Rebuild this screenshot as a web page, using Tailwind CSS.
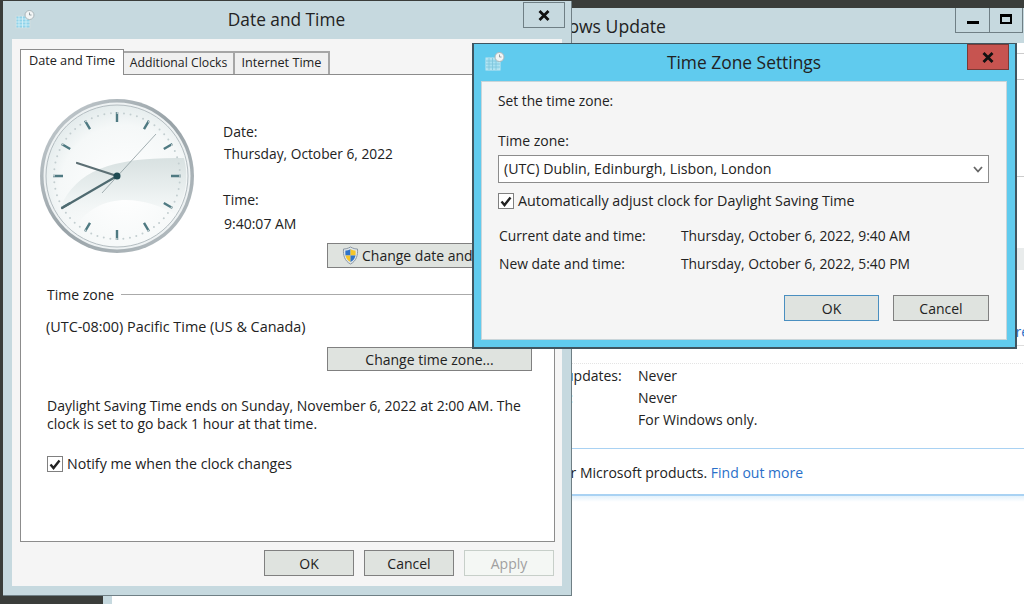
<!DOCTYPE html>
<html lang="en">

<head>
    <meta charset="UTF-8">
    <title>Date and Time</title>
    <script src="https://cdn.jsdelivr.net/npm/@tailwindcss/browser@4"></script>
</head>

<body class="bg-[#3a3d3a]">
    <div class="relative w-[1024px] h-[604px] overflow-hidden bg-[#3a3d3a] font-['Open_Sans',sans-serif] text-[14px] text-[#222]">

        <!-- Windows Update window (behind) -->
        <div class="absolute left-[103px] top-[8px] w-[986px] h-[620px] bg-[#c6d9df] flex flex-col">
            <div class="relative h-[35px] shrink-0 flex items-center justify-center text-[17.600px] pt-[2px]">
                Windows Update
                <div class="absolute left-[852px] top-0 flex">
                    <div class="w-[35px] h-[25px] border border-t-0 border-[#6f7f85] flex items-center justify-center">
                        <div class="w-[12px] h-[3px] bg-black mt-[5px]"></div>
                    </div>
                    <div class="w-[33px] h-[25px] border border-l-0 border-t-0 border-[#6f7f85] flex items-center justify-center">
                        <div class="w-[12px] h-[10px] border-2 border-t-[3px] border-black mb-[3px]"></div>
                    </div>
                </div>
            </div>
            <div class="ml-[9px] flex-1 bg-white flex flex-col">
                <div class="h-[11px] border-b border-[#ccc] shrink-0"></div>
                <div class="h-[26px] border-b border-[#ccc] shrink-0"></div>
                <div class="h-[97px] border-b border-[#ccc] shrink-0"></div>
                <div class="h-[71px] shrink-0"></div>
                <div class="h-[22px] bg-[#e9ecec] shrink-0"></div>
                <div class="h-[76px] border-b border-[#ddd] shrink-0 flex items-end justify-end pb-[3px] pr-[60px] text-[#2a6fc9]">Learn more</div>
                <div class="h-[18px] border-b border-dotted border-[#e4e4e4] shrink-0"></div>
                <div class="grid grid-cols-[526px_1fr] auto-rows-[22px] items-center shrink-0">
                    <div class="pl-[308px] whitespace-nowrap">Most recent check for updates:</div>
                    <div>Never</div>
                    <div class="pl-[308px] whitespace-nowrap">Updates were installed:</div>
                    <div>Never</div>
                    <div class="pl-[308px] whitespace-nowrap">You receive updates:</div>
                    <div>For Windows only.</div>
                </div>
                <div class="h-[19px] border-b border-[#a9d2f3] shrink-0"></div>
                <div class="h-[45px] w-[691px] flex items-center justify-end pt-[1px] shrink-0">
                    <span>Get updates for other Microsoft products. <span class="text-[#2a6fc9]">Find out more</span></span>
                </div>
                <div class="h-[8px] border-t-2 border-[#a9d2f3] bg-gradient-to-b from-[#e3f1fb] to-white shrink-0"></div>
            </div>
        </div>

        <!-- Date and Time dialog -->
        <div class="absolute left-[3px] top-[1px] w-[569px] h-[595px] bg-[#c6d9df] border-r border-b border-[#6f7f85] flex flex-col">
            <div class="relative h-[38px] shrink-0 flex items-center justify-center text-[17.300px] pr-[1px]">
                <svg class="absolute left-[12px] top-[9px]" width="20" height="20" viewBox="0 0 20 20">
                    <rect x="1" y="6" width="14" height="12" fill="#8fd3ea" stroke="#cfdde0" />
                    <path d="M1 9h14M1 12h14M1 15h14M4 6v12M7.500 6v12M11 6v12" stroke="#d7f1f8" stroke-width="0.800" />
                    <circle cx="14.500" cy="5" r="4.500" fill="#f2f5f5" stroke="#a9b6ba" />
                    <path d="M14.500 2.500v2.500h2" stroke="#7d8b90" fill="none" stroke-width="0.800" />
                </svg>
                Date and Time
                <div class="absolute left-[520px] top-[1px] w-[42px] h-[26px] border border-[#6f7f85] flex items-center justify-center">
                    <svg width="12" height="11" viewBox="0 0 12 11"><path d="M1.500 1l9 9M10.500 1l-9 9" stroke="#111" stroke-width="2.800" /></svg>
                </div>
            </div>

            <div class="mx-[9px] h-[547px] bg-[#f5f5f5] flex flex-col">
                <!-- Tabs -->
                <div class="flex items-end h-[35px] pl-[8px] shrink-0 relative z-10">
                    <div class="w-[104px] h-[26px] bg-white border border-b-0 border-[#8c8c8c] flex items-center justify-center -mb-[1px] pb-[3px] text-[12.700px]">Date and Time</div>
                    <div class="w-[111px] h-[23px] bg-[#f0f0f0] border-2 border-l-0 border-b-0 border-[#a6a6a6] flex items-center justify-center pb-[1px] text-[12.250px]">Additional Clocks</div>
                    <div class="w-[95px] h-[23px] bg-[#f0f0f0] border-2 border-l-0 border-b-0 border-[#a6a6a6] flex items-center justify-center pb-[1px] text-[12.700px]">Internet Time</div>
                </div>

                <!-- Tab page -->
                <div class="ml-[8px] w-[535px] h-[468px] bg-white border border-[#8c8c8c] shrink-0 px-[26px] flex flex-col">
                    <div class="flex h-[168px] shrink-0">
                        <svg class="-ml-[9px] mt-[22px] shrink-0" width="158" height="158" viewBox="-79 -79 158 158">
                            <defs>
                                <linearGradient id="rim" x1="0" y1="0" x2="1" y2="1">
                                    <stop offset="0" stop-color="#c9d0d4" />
                                    <stop offset="0.500" stop-color="#98a2a7" />
                                    <stop offset="1" stop-color="#b9c1c5" />
                                </linearGradient>
                                <radialGradient id="face" cx="0.550" cy="0.600" r="0.650">
                                    <stop offset="0" stop-color="#ffffff" />
                                    <stop offset="0.700" stop-color="#f5f8f8" />
                                    <stop offset="1" stop-color="#dfe8e9" />
                                </radialGradient>
                                <linearGradient id="swoosh" x1="0" y1="0" x2="0" y2="1">
                                    <stop offset="0" stop-color="#d8e1e1" />
                                    <stop offset="0.500" stop-color="#edf2f2" />
                                    <stop offset="1" stop-color="#f8fafa" stop-opacity="0" />
                                </linearGradient>
                            </defs>
                            <circle r="77" fill="url(#rim)" />
                            <circle r="73.500" fill="#eef2f3" />
                            <circle r="71" fill="url(#face)" stroke="#b4bdc1" stroke-width="1" />
                            <path d="M-56 30C-40 -6 -4 -19 67 -18A69 69 0 0 1 58 38C30 22 -20 10 -46 58A69 69 0 0 1 -56 30Z" fill="url(#swoosh)" />
                            <g id="ticks" stroke="#4f7a82" stroke-width="2.400">
                                <path d="M0-64V-54M0 64V54M-64 0H-54M64 0H54" />
                                <path d="M32-55.400L27-46.800M-32 55.400L-27 46.800M32 55.400L27 46.800M-32-55.400L-27-46.800" />
                                <path d="M55.400-32L46.800-27M-55.400 32L-46.800 27M55.400 32L46.800 27M-55.400-32L-46.800-27" />
                            </g>
                            <circle r="63" fill="none" stroke="#c3ced0" stroke-width="2" stroke-linecap="round" stroke-dasharray="0 6.597" />
                            <path d="M-15 17L39-42" stroke="#8d9ca0" stroke-width="0.800" />
                            <path d="M-40-13L0 0" stroke="#5c6f74" stroke-width="2.200" stroke-linecap="round" />
                            <path d="M-55 32L0 0" stroke="#4f6a70" stroke-width="2.200" stroke-linecap="round" />
                            <circle r="3.500" fill="#1f4a52" />
                        </svg>
                        <div class="ml-[28px] pt-[46px] flex-1">
                            <div class="h-[22px] leading-[22px] -ml-[1px]">Date:</div>
                            <div class="h-[21px] leading-[21px] text-[13.750px]">Thursday, October 6, 2022</div>
                            <div class="h-[47px] pt-[25px] leading-[22px] -ml-[1px]">Time:</div>
                            <div class="mt-[2px] h-[22px] leading-[22px]">9:40:07 AM</div>
                        </div>
                    </div>
                    <div class="flex justify-end -mr-[4px] h-[25px] shrink-0">
                        <div class="w-[205px] h-[25px] bg-[#dfe3df] border border-[#808080] flex items-center pl-[14px] gap-[3px] whitespace-nowrap overflow-hidden">
                            <svg class="shrink-0" width="17" height="19" viewBox="0 0 17 19">
                                <path d="M8.500 1C6 2.500 3.500 3 1.500 3C1 9 2.500 15 8.500 18C14.500 15 16 9 15.500 3C13.500 3 11 2.500 8.500 1Z" fill="#dfe6ea" stroke="#8b97a3" />
                                <path d="M8.500 3V9.500H3.500C3.300 6.500 3.300 5.500 3.500 4.500C5 4.500 7 4 8.500 3Z" fill="#2f73c9" />
                                <path d="M8.500 3C10 4 12 4.500 13.500 4.500C13.700 6 13.700 8 13.500 9.500H8.500Z" fill="#f6c629" />
                                <path d="M3.500 9.500H8.500V16C5.500 14.500 4 12 3.500 9.500Z" fill="#f6c629" />
                                <path d="M8.500 9.500H13.500C13 12 11.500 14.500 8.500 16Z" fill="#2f73c9" />
                            </svg>
                            Change date and time...
                        </div>
                    </div>
                    <div class="flex items-center gap-[7px] h-[18px] mt-[17px] shrink-0">
                        <span>Time zone</span>
                        <div class="flex-1 h-px bg-[#aaa] -mr-[3px]"></div>
                    </div>
                    <div class="mt-[14px] h-[20px] leading-[20px] -ml-[1px] text-[14.400px] whitespace-nowrap shrink-0">(UTC-08:00) Pacific Time (US &amp; Canada)</div>
                    <div class="flex justify-end -mr-[4px] mt-[10px] shrink-0">
                        <div class="w-[205px] h-[24px] bg-[#dfe3df] border border-[#808080] flex items-center justify-center">Change time zone...</div>
                    </div>
                    <div class="mt-[26px] leading-[18px] w-[490px] shrink-0">Daylight Saving Time ends on Sunday, November 6, 2022 at 2:00 AM. The clock is set to go back 1 hour at that time.</div>
                    <div class="flex items-center gap-[4px] mt-[23px] h-[16px] shrink-0">
                        <div class="w-[16px] h-[16px] border border-[#808080] bg-white flex items-center justify-center shrink-0">
                            <svg width="12" height="11" viewBox="0 0 12 11"><path d="M1.500 5.500L4.500 9L10.500 1.500" fill="none" stroke="#222" stroke-width="2.400" /></svg>
                        </div>
                        <span class="text-[14.200px]">Notify me when the clock changes</span>
                    </div>
                </div>

                <!-- Bottom buttons -->
                <div class="flex justify-end gap-[10px] pt-[8px] pr-[8px]">
                    <div class="w-[90px] h-[26px] bg-[#dfe3df] border border-[#808080] flex items-center justify-center">OK</div>
                    <div class="w-[90px] h-[26px] bg-[#dfe3df] border border-[#808080] flex items-center justify-center">Cancel</div>
                    <div class="w-[90px] h-[26px] bg-[#f4f7f4] border border-[#c7cfc9] text-[#a0a0a0] flex items-center justify-center">Apply</div>
                </div>
            </div>
        </div>

        <!-- Time Zone Settings dialog -->
        <div class="absolute left-[472px] top-[43px] w-[545px] h-[306px] bg-[#60cbee] border-2 border-t border-[#3f5560] flex flex-col">
            <div class="relative h-[37px] shrink-0 flex items-center justify-center text-[17.400px] pr-[1px] pb-[1px]">
                <svg class="absolute left-[11px] top-[8px]" width="20" height="20" viewBox="0 0 20 20">
                    <rect x="1" y="6" width="14" height="12" fill="#a9e2f2" stroke="#c4e6ef" />
                    <path d="M1 9h14M1 12h14M1 15h14M4 6v12M7.500 6v12M11 6v12" stroke="#7cc4da" stroke-width="0.800" />
                    <circle cx="14.500" cy="5" r="4.500" fill="#f2f5f5" stroke="#a9b6ba" />
                    <path d="M14.500 2.500v2.500h2" stroke="#7d8b90" fill="none" stroke-width="0.800" />
                </svg>
                Time Zone Settings
                <div class="absolute left-[493px] top-0 w-[42px] h-[26px] bg-[#c75450] border border-[#7a3a36] flex items-center justify-center">
                    <svg width="12" height="11" viewBox="0 0 12 11"><path d="M1.500 1l9 9M10.500 1l-9 9" stroke="#111" stroke-width="2.800" /></svg>
                </div>
            </div>
            <div class="ml-[7px] w-[526px] h-[259px] bg-[#f5f5f5] border border-[#c9d5d9] pl-[16px] flex flex-col">
                <div class="h-[20px] leading-[20px] mt-[9px] text-[13.750px] shrink-0">Set the time zone:</div>
                <div class="h-[20px] leading-[20px] mt-[20px] shrink-0">Time zone:</div>
                <div class="mt-[4px] w-[491px] h-[28px] bg-white border border-[#8c8c8c] flex items-center justify-between pl-[5px] pr-[5px] shrink-0">
                    <span class="text-[14.200px]">(UTC) Dublin, Edinburgh, Lisbon, London</span>
                    <svg width="10" height="7" viewBox="0 0 10 7"><path d="M1 1L5 5.500L9 1" fill="none" stroke="#666" stroke-width="1.800" /></svg>
                </div>
                <div class="flex items-center gap-[4px] mt-[10px] h-[16px] shrink-0">
                    <div class="w-[16px] h-[16px] border border-[#808080] bg-white flex items-center justify-center shrink-0">
                        <svg width="12" height="11" viewBox="0 0 12 11"><path d="M1.500 5.500L4.500 9L10.500 1.500" fill="none" stroke="#222" stroke-width="2.400" /></svg>
                    </div>
                    <span class="text-[14.300px]">Automatically adjust clock for Daylight Saving Time</span>
                </div>
                <div class="grid grid-cols-[182px_1fr] auto-rows-[28px] items-center mt-[13px] ml-[1px] text-[13.850px] shrink-0">
                    <div>Current date and time:</div>
                    <div>Thursday, October 6, 2022, 9:40 AM</div>
                    <div>New date and time:</div>
                    <div>Thursday, October 6, 2022, 5:40 PM</div>
                </div>
                <div class="flex justify-end gap-[14px] mt-[17px] pr-[17px] shrink-0">
                    <div class="w-[95px] h-[26px] bg-[#dfe3df] border border-[#4a8fc0] flex items-center justify-center">OK</div>
                    <div class="w-[96px] h-[26px] bg-[#dfe3df] border border-[#808080] flex items-center justify-center">Cancel</div>
                </div>
            </div>
        </div>
    </div>
</body>

</html>
